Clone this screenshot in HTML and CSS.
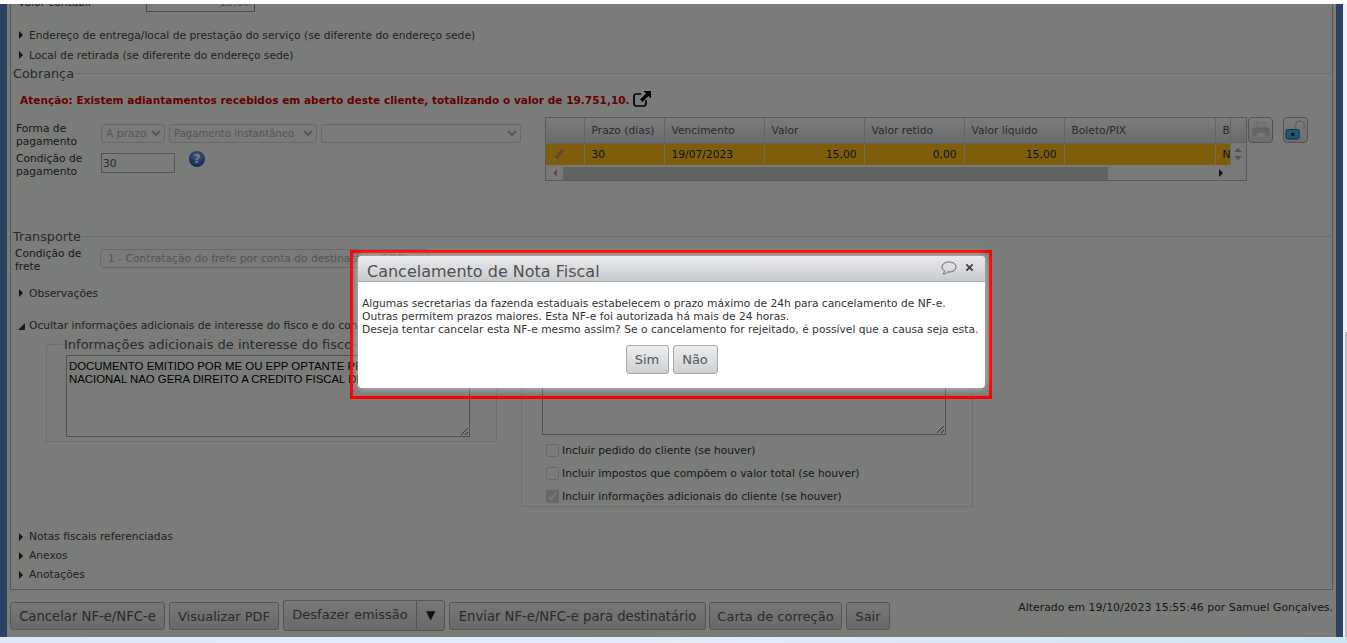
FILE: index.html
```html
<!DOCTYPE html>
<html lang="pt-BR">
<head>
<meta charset="utf-8">
<title>Cancelamento de Nota Fiscal</title>
<link rel="stylesheet" href="styles.css">
</head>
<body>
<div class="top-strip"></div>
<div class="shell">
  <div class="window">
    <div class="rail"></div>
    <div class="content">
      <main class="panel">
        <div class="clipped-row"><span class="clipped-label">Valor contábil</span><input class="clipped-input" value="15,00" disabled></div>
        <div class="expander"><span class="arrow"></span>Endereço de entrega/local de prestação do serviço (se diferente do endereço sede)</div>
        <div class="expander"><span class="arrow"></span>Local de retirada (se diferente do endereço sede)</div>

        <fieldset class="section section-billing">
          <legend>Cobrança</legend>
          <p class="alert">Atenção: Existem adiantamentos recebidos em aberto deste cliente, totalizando o valor de 19.751,10.
            <svg class="ext-icon" viewBox="0 0 18 16"><path d="M8 3H3.2C2 3 1 4 1 5.2v7.6C1 14 2 15 3.2 15h7.6c1.2 0 2.2-1 2.2-2.2V9" fill="none" stroke="#000" stroke-width="1.7"/><path d="M10.500 0H18v7.500l-2.600-2.600-6 6-2.300-2.300 6-6z" fill="#000"/></svg>
          </p>
          <div class="pay-row">
            <div class="pay-form">
              <div class="form-line">
                <label class="form-label">Forma de pagamento</label>
                <select class="sel sel-a" disabled><option>A prazo</option></select>
                <select class="sel sel-b" disabled><option>Pagamento instantâneo</option></select>
                <select class="sel sel-c" disabled><option></option></select>
              </div>
              <div class="form-line form-line-cond">
                <label class="form-label">Condição de pagamento</label>
                <input class="cond-input" value="30">
                <span class="help">?</span>
              </div>
            </div>
            <div class="grid">
              <div class="grid-top">
                <table class="grid-table">
                  <thead>
                    <tr><th class="c1"></th><th class="c2">Prazo (dias)</th><th class="c3">Vencimento</th><th class="c4">Valor</th><th class="c4">Valor retido</th><th class="c4">Valor líquido</th><th class="c5">Boleto/PIX</th><th class="c6">Bol</th></tr>
                  </thead>
                  <tbody>
                    <tr>
                      <td class="c1"><svg class="pencil" viewBox="0 0 14 17"><path d="M1 16l1-4.500L10.500 1l3 2.500L5 14z" fill="#e0913a"/><path d="M10.500 1l3 2.500-1.200 1.500-3-2.500z" fill="#f0b080"/><path d="M1 16l1-4.500 3 2.500z" fill="#f7e0b0"/></svg></td>
                      <td class="c2">30</td><td class="c3">19/07/2023</td><td class="c4 num">15,00</td><td class="c4 num">0,00</td><td class="c4 num">15,00</td><td class="c5"></td><td class="c6">Não</td>
                    </tr>
                  </tbody>
                </table>
                <div class="vscroll"><div class="vhead"></div><div class="vbody"><span class="tri-up"></span><span class="tri-down"></span></div></div>
              </div>
              <div class="hscroll"><span class="tri-left"></span><div class="hthumb"></div><span class="tri-right"></span></div>
            </div>
            <button class="icon-btn icon-btn-print"><svg viewBox="0 0 20 20"><path d="M5 1.500h10v6H5z" fill="#e8e8e8" stroke="#ccc"/><path d="M2 8h16q1 0 1 1v6q0 1-1 1H2q-1 0-1-1V9q0-1 1-1z" fill="#d0d0d0" stroke="#bbb"/><path d="M5 13h10v6H5z" fill="#f0f0f0" stroke="#ccc"/><circle cx="16" cy="10.500" r="1" fill="#7c7"/></svg></button>
            <button class="icon-btn icon-btn-lock"><svg viewBox="0 0 22 22"><path d="M11 10V5.500a4.500 4.500 0 0 1 9 0V10" fill="none" stroke="#ccc" stroke-width="2"/><rect x="1" y="10" width="14" height="10" rx="2" fill="#3fb4e6" stroke="#1a6090"/><circle cx="8" cy="15" r="2" fill="#0a3050"/></svg></button>
          </div>
        </fieldset>

        <fieldset class="section section-transport">
          <legend>Transporte</legend>
          <div class="form-line">
            <label class="form-label">Condição de frete</label>
            <select class="sel sel-freight" disabled><option>1 - Contratação do frete por conta do destinatário (FOB)</option></select>
          </div>
        </fieldset>

        <div class="expander expander-obs"><span class="arrow"></span>Observações</div>
        <div class="expander expander-open"><span class="arrow-open"></span>Ocultar informações adicionais de interesse do fisco e do contribuinte</div>

        <div class="info-row">
          <fieldset class="info info-left">
            <legend>Informações adicionais de interesse do fisco</legend>
            <textarea class="info-text" readonly>DOCUMENTO EMITIDO POR ME OU EPP OPTANTE PELO SIMPLES NACIONAL NAO GERA DIREITO A CREDITO FISCAL DE IPI</textarea>
          </fieldset>
          <fieldset class="info info-right">
            <legend>Informações adicionais de interesse do contribuinte</legend>
            <textarea class="info-text" readonly></textarea>
            <label class="check"><input type="checkbox" disabled>Incluir pedido do cliente (se houver)</label>
            <label class="check"><input type="checkbox" disabled>Incluir impostos que compõem o valor total (se houver)</label>
            <label class="check"><input type="checkbox" checked disabled>Incluir informações adicionais do cliente (se houver)</label>
          </fieldset>
        </div>

        <div class="expander expander-notes"><span class="arrow"></span>Notas fiscais referenciadas</div>
        <div class="expander expander-tight"><span class="arrow"></span>Anexos</div>
        <div class="expander expander-tight"><span class="arrow"></span>Anotações</div>
      </main>

      <footer class="footer">
        <button class="btn btn-cancel">Cancelar NF-e/NFC-e</button>
        <button class="btn btn-pdf">Visualizar PDF</button>
        <div class="split"><button class="split-main">Desfazer emissão</button><button class="split-caret">▼</button></div>
        <button class="btn btn-send">Enviar NF-e/NFC-e para destinatário</button>
        <button class="btn btn-letter">Carta de correção</button>
        <button class="btn btn-exit">Sair</button>
        <span class="status">Alterado em 19/10/2023 15:55:46 por Samuel Gonçalves.</span>
      </footer>
    </div>
    <div class="rail"></div>

    <div class="overlay"></div>
    <div class="highlight">
      <section class="dialog">
        <header class="dialog-head">
          <h2 class="dialog-title">Cancelamento de Nota Fiscal</h2>
          <svg class="dialog-chat" viewBox="0 0 16 14"><path d="M8 1C4 1 1 3 1 6c0 1.700 1 3 2.500 3.800C3.400 11 3 12 2 13c2 0 3.500-.8 4.500-2H8c4 0 7-2 7-5s-3-5-7-5z" fill="none" stroke="#666" stroke-width="1"/></svg>
          <svg class="dialog-close" viewBox="0 0 10 10"><path d="M1.500 1.500l7 7M8.500 1.500l-7 7" stroke="#444" stroke-width="2.200"/></svg>
        </header>
        <div class="dialog-body">
          <p class="dialog-text">Algumas secretarias da fazenda estaduais estabelecem o prazo máximo de 24h para cancelamento de NF-e.<br>Outras permitem prazos maiores. Esta NF-e foi autorizada há mais de 24 horas.<br>Deseja tentar cancelar esta NF-e mesmo assim? Se o cancelamento for rejeitado, é possível que a causa seja esta.</p>
          <div class="dialog-actions"><button class="dialog-btn btn-yes">Sim</button><button class="dialog-btn btn-no">Não</button></div>
        </div>
      </section>
    </div>
  </div>
  <div class="site-scroll"><div class="site-thumb"></div></div>
</div>
<div class="bottom-strip"></div>
</body>
</html>
```
FILE: styles.css
```css
* { box-sizing: border-box; }
html, body { margin: 0; height: 643px; overflow: hidden; }
body { background: #eef3fb; font-family: "DejaVu Sans", Verdana, sans-serif; font-size: 10.7px; color: #444; }

.top-strip { height: 4px; background: #fff; }
.shell { display: flex; height: 633px; }
.bottom-strip { height: 6px; background: linear-gradient(90deg, #dfe9f8, #e4ecf8 50%, #cfe6f2); }

.window { position: relative; width: 1343px; display: flex; background: #f5f8f5; }
.rail { width: 7px; background: #5887bf; flex: none; }
.content { flex: 1; min-width: 0; padding: 0 3px; display: flex; flex-direction: column; }
.site-scroll { width: 4px; padding-left: 2px; display: flex; flex-direction: column; justify-content: flex-end; }
.site-thumb { height: 305px; background: #b9b9c2; }

.overlay { position: absolute; inset: 0; background: rgba(0, 0, 0, .5); }

.panel { height: 586px; flex: none; overflow: hidden; padding-left: 1px; border: solid #b0b0b0; border-width: 0 1px 1px 1px; }

.clipped-row { display: flex; align-items: center; height: 19px; margin-top: -11px; padding-left: 6px; }
.clipped-label { width: 128px; }
.clipped-input { width: 109px; height: 19px; border: 1px solid #999; background: #f5f8f5; text-align: right; font: inherit; color: #aaa; padding: 0 4px; }

.expander { display: flex; align-items: center; height: 20px; padding-left: 7px; white-space: nowrap; }
.clipped-row + .expander { margin-top: 13px; }
.arrow { width: 0; height: 0; margin-right: 6px; border-left: 4px solid #222; border-top: 4px solid transparent; border-bottom: 4px solid transparent; }
.arrow-open { width: 0; height: 0; margin: 2px 4px 0 -1px; border-left: 7px solid transparent; border-bottom: 7px solid #333; }

.section { margin: 0 0 0 -1px; padding: 0; border: 0; border-top: 1px solid #ddd; min-width: 0; }
.section legend { padding: 0 1px; margin-left: 1px; font-size: 12.8px; line-height: 15px; color: #555; }
.section-billing { height: 156px; margin-top: 1px; }
.section-transport { height: 54px; margin-top: 7px; }

.alert { margin: 9px 0 0 9px; height: 20px; display: flex; align-items: center; gap: 3px; font-weight: bold; font-size: 10.57px; color: #d00000; white-space: nowrap; }
.ext-icon { width: 18px; height: 16px; flex: none; margin-top: -3px; }

.pay-row { display: flex; align-items: flex-start; margin-top: 7px; padding-left: 1px; }
.pay-form { width: 533px; padding-left: 4px; flex: none; }
.form-line { display: flex; align-items: flex-start; gap: 4px; }
.form-line-cond { margin-top: 3px; }
.form-label { width: 81px; flex: none; line-height: 13px; color: #333; padding-top: 5px; }
.form-line-cond .form-label { padding-top: 1px; }
.sel { height: 19px; margin: 7px 0 0; padding: 0; border: 1px solid #d0d0d0; border-radius: 3px; background: #f5f5f5; color: #aaa; font: inherit; font-size: 10.7px; opacity: 1; }
.sel-a { width: 64px; }
.sel-b { width: 148px; font-size: 10.1px; }
.sel-c { width: 200px; }
.cond-input { width: 74px; height: 20px; margin: 2px 0 0; padding: 0 1px; border: 1px solid #aaa; background: #f5f8f5; font: inherit; font-size: 10.7px; color: #555; }
.help { width: 16px; height: 16px; margin-left: 10px; border-radius: 50%; background: radial-gradient(circle at 50% 30%, #8ab4e8, #2a5fb0 70%); color: #fff; font-weight: bold; font-size: 12px; line-height: 16px; text-align: center; }

.grid { width: 702px; height: 64px; flex: none; border: 1px solid #b4b4b4; overflow: hidden; display: flex; flex-direction: column; background: #f2f2f2; }
.grid-top { display: flex; height: 47px; flex: none; }
.grid-table { border-collapse: collapse; table-layout: fixed; width: 683px; flex: none; }
.grid-table th, .grid-table td { padding: 0 7px; border-right: 1px solid #c8c8c8; overflow: hidden; white-space: nowrap; font-weight: normal; text-align: left; }
.grid-table th { height: 25px; background: linear-gradient(#f6f8fa, #d4d6da); color: #555; border-bottom: 1px solid #c8c8c8; }
.grid-table td { height: 21px; background: #fdbc14; color: #222; border-color: #e6dcc0; }
.grid-table .num { text-align: right; }
.grid-table .c1 { width: 38px; padding: 0; }
.grid-table .c2 { width: 80px; }
.grid-table .c3 { width: 100px; }
.grid-table .c4 { width: 100px; }
.grid-table .c5 { width: 151px; }
.grid-table .c6 { width: 14px; border-right: 1px solid #c8c8c8; }
.pencil { display: block; width: 14px; height: 17px; margin-left: 6px; }
.vscroll { flex: 1; display: flex; flex-direction: column; }
.vhead { height: 25px; background: linear-gradient(#f6f8fa, #d4d6da); border-bottom: 1px solid #c8c8c8; }
.vbody { flex: 1; display: flex; flex-direction: column; align-items: center; justify-content: center; gap: 4px; }
.tri-up, .tri-down, .tri-left, .tri-right { width: 0; height: 0; flex: none; border-style: solid; border-color: transparent; }
.tri-up { border-width: 0 4px 4px; border-bottom-color: #a8a8a8; }
.tri-down { border-width: 4px 4px 0; border-top-color: #a8a8a8; }
.hscroll { width: 684px; height: 15px; margin-top: 1px; display: flex; align-items: center; padding: 0 7px; }
.tri-left { border-width: 4px 4px 4px 0; border-right-color: #a0a0a0; }
.hthumb { width: 545px; height: 13px; margin-left: 6px; background: #c6c6c6; }
.tri-right { margin-left: auto; border-width: 4px 0 4px 4px; border-left-color: #222; }

.icon-btn { width: 25px; height: 26px; flex: none; margin-left: 1px; padding: 1px; border: 1px solid #a8a8a8; border-radius: 4px; background: linear-gradient(#f8f8f8, #dcdcdc); display: flex; align-items: center; justify-content: center; }
.icon-btn svg { width: 21px; height: 21px; flex: none; }
.icon-btn-print svg { width: 18px; height: 18px; }
.icon-btn-lock { margin-left: 10px; }

.section-transport .form-line { margin-top: 0; padding-left: 4px; }
.section-transport .form-label { padding-top: 3px; }
.sel-freight { width: 329px; margin: 5px 0 0; padding-left: 3px; }

.expander-obs { margin-top: 0; margin-bottom: 12px; }
.expander-open { height: 20px; }

.info-row { display: flex; margin: 2px 0 0 34px; align-items: flex-start; gap: 24px; }
.info { margin: 0; padding: 0 0 0 19px; border: 1px solid #ddd; border-radius: 0; min-width: 0; width: 451px; }
.info legend { margin-left: -4px; padding: 0 2px; font-size: 13px; line-height: 15px; color: #555; white-space: nowrap; }
.info-left { height: 105px; }
.info-right { width: 452px; height: 170px; padding-left: 20px; }
.info-text { display: block; width: 404px; height: 82px; margin: 3px 0 0; padding: 4px 2px 1px; border: 1px solid #a0a0a0; background: #f5f8f5; font-family: "Liberation Sans", Arial, sans-serif; font-size: 11.4px; line-height: 13px; color: #000; }
.info-right .info-text { height: 78px; margin-top: 5px; }
.check { display: flex; align-items: center; height: 23px; margin-left: 4px; white-space: nowrap; color: #333; }
.info-text + .check { margin-top: 4px; }
.check input { width: 13px; height: 13px; margin: 0 3px 0 0; }

.expander-notes { margin-top: 20px; height: 19px; }
.expander-tight { height: 19px; }

.footer { display: flex; align-items: flex-start; flex: none; height: 47px; padding-top: 10px; gap: 4px; }
.btn, .split-main, .split-caret { height: 28px; margin-top: 2px; padding: 0; border: 1px solid #aaa; border-radius: 3px; background: linear-gradient(#f0f0f0, #d4d4d4); font-family: inherit; font-size: 13px; color: #555; white-space: nowrap; }
.btn-cancel { width: 155px; font-size: 13.2px; }
.btn-pdf { width: 110px; }
.split { display: flex; }
.split-main, .split-caret { height: 31px; margin-top: 0; }
.split-main { width: 133px; border-radius: 3px 0 0 3px; border-right: 0; padding-bottom: 2px; }
.split-caret { width: 29px; border-radius: 0 3px 3px 0; color: #222; font-size: 12px; padding-bottom: 2px; }
.btn-send { width: 257px; font-size: 13.2px; }
.btn-letter { width: 133px; margin-left: -1px; }
.btn-exit { width: 44px; }
.status { margin-left: auto; padding-top: 1px; white-space: nowrap; color: #333; font-size: 10.9px; }

.highlight { position: absolute; left: 350px; top: 246px; width: 642px; height: 149px; border: 3px solid #f00; padding: 3px 4px 0 5px; z-index: 2; }
.dialog { height: 132px; border-radius: 4px; background: #fff; overflow: hidden; box-shadow: 0 0 8px rgba(255, 255, 255, .6); }
.dialog-head { height: 26px; display: flex; align-items: center; padding: 6px 11px 0 9px; background: linear-gradient(#e9eaec, #c8cbce); border-bottom: 1px solid #aab0b6; }
.dialog-title { margin: 0; flex: 1; font-size: 16px; font-weight: normal; color: #505050; white-space: nowrap; }
.dialog-chat { width: 16px; height: 14px; margin: -8px 8px 0 0; }
.dialog-close { width: 9px; height: 9px; margin-top: -8px; }
.dialog-body { padding: 15px 4px 0; }
.dialog-text { margin: 0; font-size: 10.7px; line-height: 13px; color: #333; white-space: nowrap; }
.dialog-actions { display: flex; justify-content: center; gap: 4px; margin-top: 9px; }
.dialog-btn { height: 29px; padding: 0; border: 1px solid #aaa; border-radius: 3px; background: linear-gradient(#eceeef, #cdd0d3); font-family: inherit; font-size: 13px; color: #555; }
.btn-yes { width: 43px; }
.btn-no { width: 45px; }
```
